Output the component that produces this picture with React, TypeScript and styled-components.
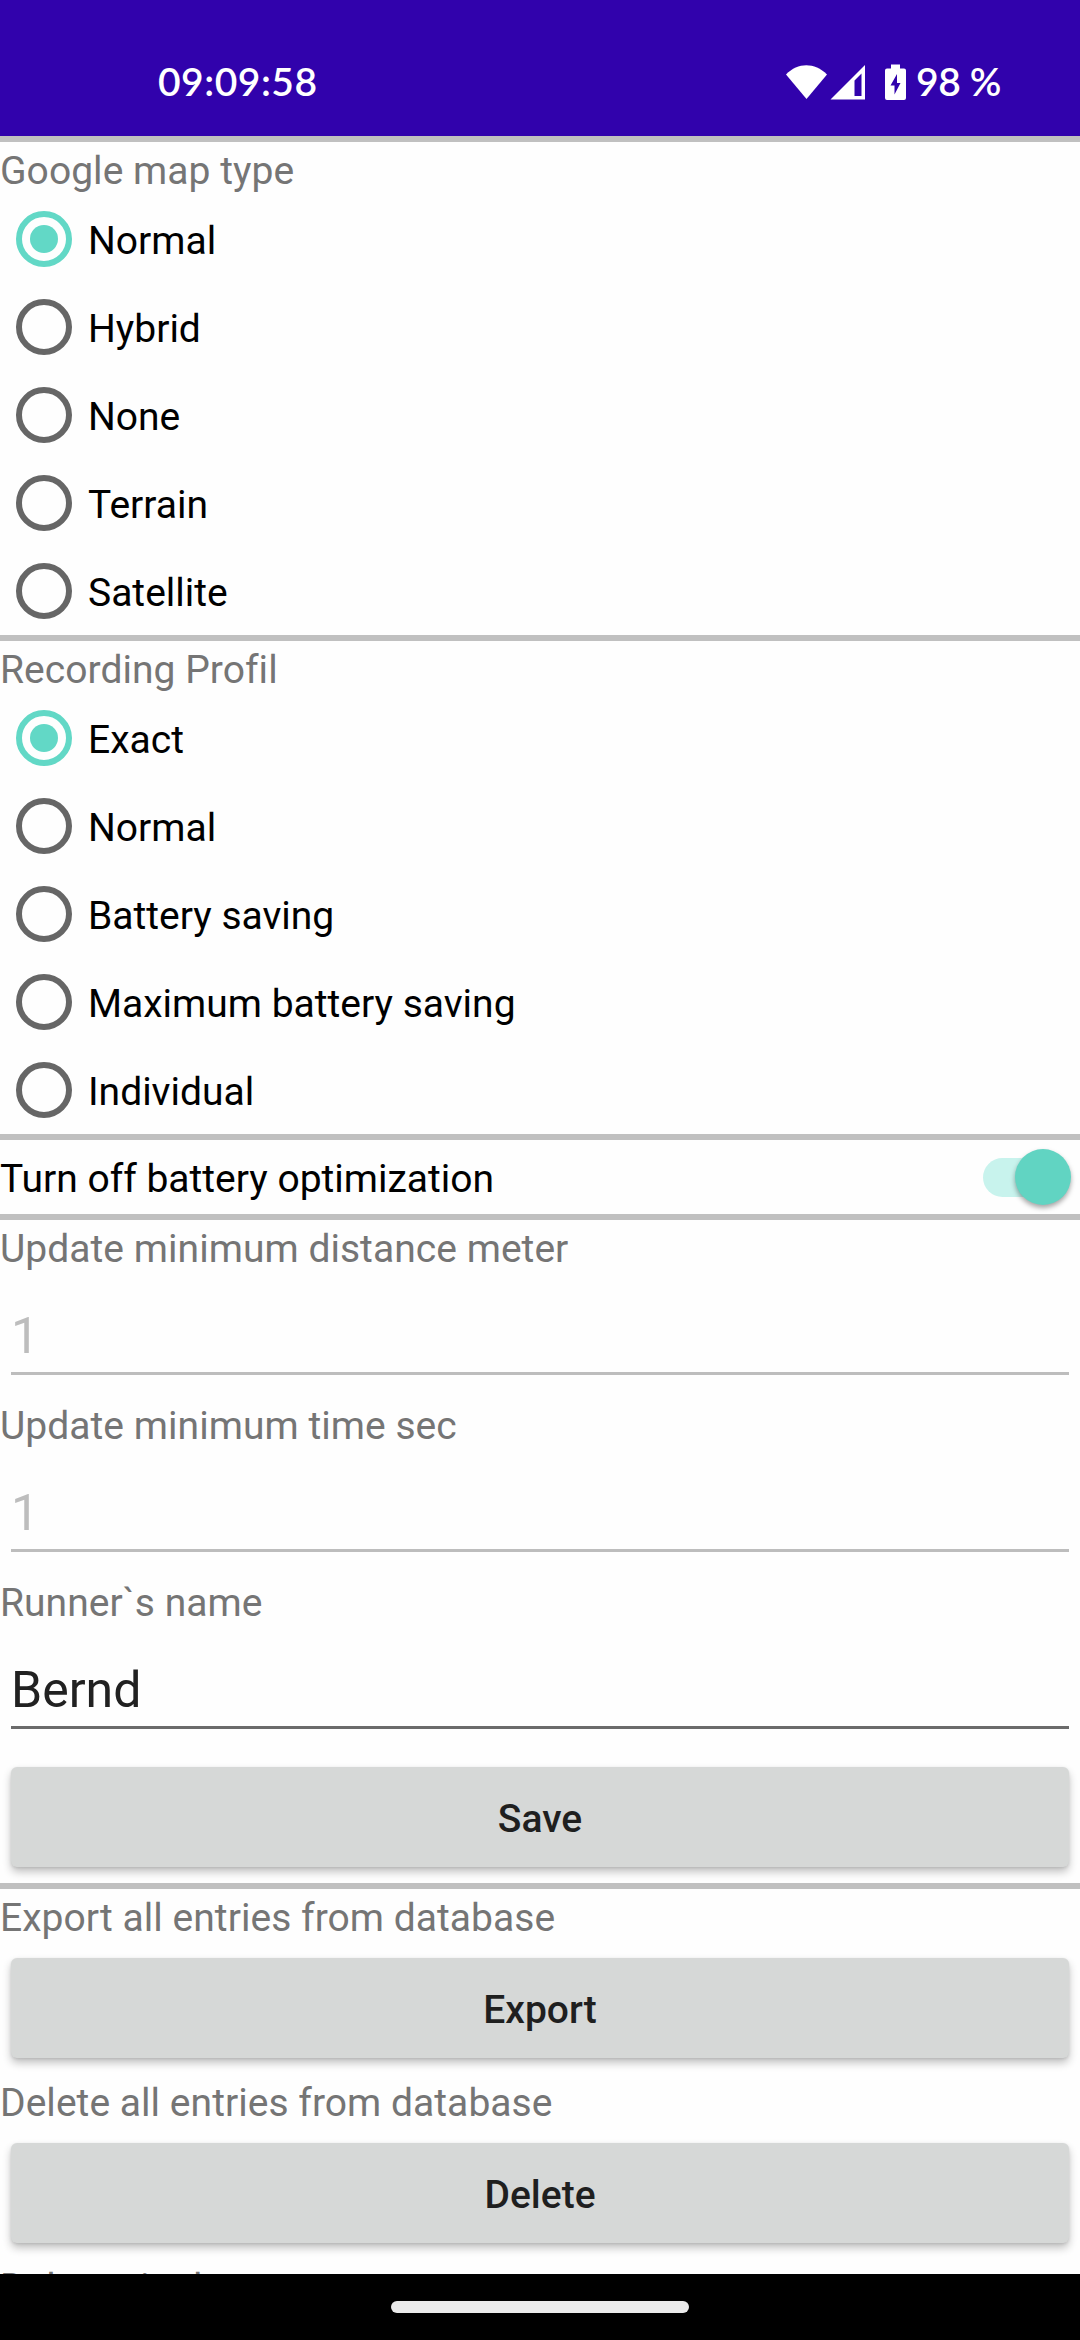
import React, { useState } from 'react';
import styled, { createGlobalStyle, css } from 'styled-components';

const Global = createGlobalStyle`
  * { box-sizing: border-box; }
  html, body { margin: 0; padding: 0; background: #fff; }
`;

const Screen = styled.div`
  width: 1080px;
  height: 2340px;
  display: flex;
  flex-direction: column;
  overflow: hidden;
  background: #fefefe;
  font-family: Roboto, 'Noto Sans', sans-serif;
  font-size: 39px;
  color: #000;
`;

const StatusBar = styled.header`
  flex: none;
  height: 136px;
  padding: 30px 0 0 158px;
  display: flex;
  align-items: center;
  justify-content: space-between;
  background: #3102ac;
  color: #fff;
  font-family: Lato, sans-serif;
  font-weight: 600;
  font-size: 39px;
  line-height: 1;
`;

const Clock = styled.span`
  padding-bottom: 3px;
  letter-spacing: 0.5px;
`;

const StatusIcons = styled.div`
  width: 294px;
  display: flex;
  align-items: center;
`;

const Percent = styled.span`
  margin-left: -2px;
  padding-bottom: 3px;
  letter-spacing: -0.4px;
  white-space: nowrap;
`;

const Glyphs = styled.svg`
  flex: none;
  display: block;
  width: 132px;
  height: 40px;
`;

const Content = styled.main`
  flex: 1;
  min-height: 0;
  overflow: hidden;
`;

const Divider = styled.div`
  height: 6px;
  background: #c0c0c0;
`;

const Label = styled.div`
  height: 53px;
  padding-top: 6px;
  line-height: 46px;
  letter-spacing: 0.04px;
  white-space: nowrap;
  color: #757575;
`;

const Option = styled.label`
  height: 88px;
  padding-left: 16px;
  display: flex;
  align-items: center;
  gap: 16px;
`;

const Ring = styled.span<{ $on: boolean }>`
  width: 56px;
  height: 56px;
  border: 6px solid ${(p) => (p.$on ? '#62d8c6' : '#666')};
  border-radius: 50%;
  display: flex;
  align-items: center;
  justify-content: center;
  ${(p) =>
    p.$on &&
    css`
      &::after {
        content: '';
        width: 28px;
        height: 28px;
        border-radius: 50%;
        background: #62d8c6;
      }
    `}
`;

const OptionText = styled.span`
  line-height: 46px;
  padding-top: 4px;
`;

const SwitchRow = styled.div`
  height: 74px;
  padding-right: 9px;
  display: flex;
  align-items: center;
  justify-content: space-between;
`;

const Track = styled.span`
  width: 84px;
  height: 39px;
  margin-right: 4px;
  border-radius: 20px;
  background: #c8f3ed;
  display: flex;
  align-items: center;
  justify-content: flex-end;
`;

const Thumb = styled.span`
  flex: none;
  width: 56px;
  height: 56px;
  margin-right: -4px;
  border-radius: 50%;
  background: #61d4c2;
  box-shadow: 0 3px 5px rgba(0, 0, 0, 0.35);
`;

const Field = styled.div<{ $disabled?: boolean }>`
  height: 102px;
  margin: 0 11px 22px;
  padding-top: 34px;
  border-bottom: 3px solid ${(p) => (p.$disabled ? '#bdbdbd' : '#6b6b6b')};
  font-size: 50px;
  line-height: 58px;
  color: ${(p) => (p.$disabled ? '#bdbdbd' : '#212121')};
`;

const Button = styled.button`
  display: block;
  width: 1058px;
  height: 100px;
  margin: 16px 11px;
  padding: 4px 0 0;
  border: 0;
  border-radius: 6px;
  background: #d6d8d7;
  box-shadow: 0 5px 8px rgba(0, 0, 0, 0.24), 0 1px 3px rgba(0, 0, 0, 0.1);
  font: 500 39px/46px Roboto, sans-serif;
  color: #1f1f1f;
`;

const ButtonSlot = styled.div`
  display: flow-root;
  height: 132px;
`;

const NavBar = styled.footer`
  flex: none;
  position: relative;
  height: 66px;
  padding-top: 27px;
  background: #000;
`;

const NavPill = styled.div`
  width: 298px;
  height: 12px;
  margin: 0 auto;
  border-radius: 6px;
  background: #ebebeb;
`;

function StatusGlyphs() {
  return (
    <Glyphs viewBox="0 0 132 40" fill="#fff">
      <path d="M0 11.5C12-.8 28.500-.8 41 11.500L20.500 36Z" />
      <path fillRule="evenodd" d="M44.500 36.500H79V2ZM68.500 17.500V33H75.500V10.500Z" />
      <path
        fillRule="evenodd"
        d="M105 1.500H114V5.500H118Q120 5.500 120 7.500V35Q120 37 118 37H101Q99 37 99 35V7.500Q99 5.500 101 5.500H105ZM111 11L104.500 22.500H108.500V31.500L114.500 20H111Z"
      />
    </Glyphs>
  );
}

function RadioSection({ title, options }: { title: string; options: string[] }) {
  const [selected, setSelected] = useState(0);
  return (
    <section>
      <Divider />
      <Label>{title}</Label>
      {options.map((name, i) => (
        <Option key={name} onClick={() => setSelected(i)}>
          <Ring $on={i === selected} />
          <OptionText>{name}</OptionText>
        </Option>
      ))}
    </section>
  );
}

function Action({ text }: { text: string }) {
  return (
    <ButtonSlot>
      <Button>{text}</Button>
    </ButtonSlot>
  );
}

export default function App() {
  return (
    <Screen>
      <Global />
      <StatusBar>
        <Clock>09:09:58</Clock>
        <StatusIcons>
          <StatusGlyphs />
          <Percent>98 %</Percent>
        </StatusIcons>
      </StatusBar>
      <Content>
        <RadioSection title="Google map type" options={['Normal', 'Hybrid', 'None', 'Terrain', 'Satellite']} />
        <RadioSection
          title="Recording Profil"
          options={['Exact', 'Normal', 'Battery saving', 'Maximum battery saving', 'Individual']}
        />
        <Divider />
        <SwitchRow>
          <OptionText>Turn off battery optimization</OptionText>
          <Track>
            <Thumb />
          </Track>
        </SwitchRow>
        <Divider />
        <Label>Update minimum distance meter</Label>
        <Field $disabled>1</Field>
        <Label>Update minimum time sec</Label>
        <Field $disabled>1</Field>
        <Label>Runner`s name</Label>
        <Field>Bernd</Field>
        <Action text="Save" />
        <Divider />
        <Label>Export all entries from database</Label>
        <Action text="Export" />
        <Label>Delete all entries from database</Label>
        <Action text="Delete" />
        <Label>Delete single</Label>
      </Content>
      <NavBar>
        <NavPill />
      </NavBar>
    </Screen>
  );
}
